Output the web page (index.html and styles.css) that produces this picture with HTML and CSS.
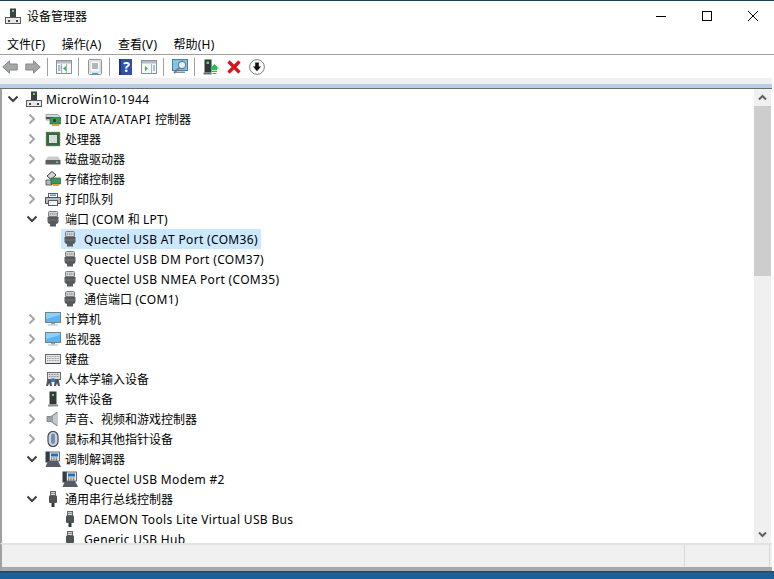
FILE: index.html
```html
<!DOCTYPE html>
<html lang="zh-CN">
<head>
    <meta charset="UTF-8">
    <meta name="viewport" content="width=device-width, initial-scale=1.0">
    <title>设备管理器</title>
    <link rel="stylesheet" href="styles.css">
</head>
<body>

    <!-- icon set -->
    <svg class="defs" width="0" height="0">
        <symbol id="i-pc" viewBox="0 0 16 16">
            <rect x="5" y="0.5" width="6" height="9" fill="#3a4044"/>
            <rect x="7" y="2" width="2" height="2" fill="#5be05b"/>
            <rect x="0.5" y="9.5" width="15" height="6" fill="#e8e8e8" stroke="#55595c"/>
            <rect x="3" y="12" width="2" height="2" fill="#444"/>
            <rect x="11" y="12" width="2" height="2" fill="#444"/>
        </symbol>
        <symbol id="i-ide" viewBox="0 0 16 16">
            <path d="M1 3.5 H13 L15 6 V9 H1 Z" fill="#d4d8da" stroke="#8d9296" stroke-width="0.8"/>
            <rect x="1" y="6" width="7" height="2" fill="#4a4f52"/>
            <rect x="5" y="6.5" width="10.5" height="6.5" fill="#3f9462" stroke="#23663f" stroke-width="0.7"/>
            <rect x="8" y="8" width="3" height="3" fill="#1e4a30"/>
            <rect x="7" y="13" width="7" height="2" fill="#e2a42c"/>
        </symbol>
        <symbol id="i-cpu" viewBox="0 0 16 16">
            <rect x="1" y="1" width="14" height="14" fill="#2f6b4a" stroke="#b59a4a" stroke-width="0.8" stroke-dasharray="1 0.6"/>
            <rect x="4" y="4" width="8" height="8" fill="#dcdcd6"/>
        </symbol>
        <symbol id="i-disk" viewBox="0 0 16 16">
            <path d="M3 5.5 H13 L15.5 9 H0.5 Z" fill="#c9cccd"/>
            <rect x="0.5" y="9" width="15" height="4.5" fill="#5a5e61"/>
            <rect x="11" y="10.5" width="2" height="1.5" fill="#62e062"/>
        </symbol>
        <symbol id="i-store" viewBox="0 0 16 16">
            <path d="M2 5 L7 0.5 L11 4 L6 8.5 Z" fill="#d8d8d8" stroke="#3c4144"/>
            <path d="M1 9 H7 V14 H1 Z" fill="#b4b8b8" stroke="#44484b" stroke-width="0.8"/>
            <rect x="6" y="7" width="9.5" height="6" fill="#3f9462" stroke="#23663f" stroke-width="0.7"/>
            <rect x="8" y="13" width="6" height="2" fill="#e2a42c"/>
        </symbol>
        <symbol id="i-print" viewBox="0 0 16 16">
            <rect x="3.5" y="2.5" width="9" height="4" fill="#fff" stroke="#5a5e61"/>
            <rect x="5" y="3.5" width="6" height="1.5" fill="#3ba0dc"/>
            <path d="M0.5 6.5 H15.5 V12.5 H0.5 Z" fill="#b9bdc0" stroke="#4a4f52"/>
            <rect x="3.5" y="9.5" width="9" height="5" fill="#f4f4f4" stroke="#5a5e61"/>
        </symbol>
        <symbol id="i-port" viewBox="0 0 16 16">
            <path d="M3.5 5.5 V1.5 Q3.5 0.5 4.5 0.5 H11.5 Q12.5 0.5 12.5 1.5 V5.5 Z" fill="#d2d2d2" stroke="#7a7e81"/>
            <path d="M5 3 H11.5" stroke="#6a6e71" stroke-dasharray="1 0.9"/>
            <path d="M2.5 6 H13.5 V10.5 Q13.5 12.5 11 13 V15.5 H5 V13 Q2.5 12.5 2.5 10.5 Z" fill="#565a5d"/>
            <path d="M3 9 H13" stroke="#74787b"/>
        </symbol>
        <symbol id="i-mon" viewBox="0 0 16 16">
            <rect x="0.5" y="1.5" width="15" height="10" fill="#5cb4f0" stroke="#75828c"/>
            <path d="M1 2 H15 V4 L1 8 Z" fill="#8fd0f8"/>
            <rect x="6" y="12" width="4" height="1.5" fill="#9aa2a8"/>
            <rect x="3" y="13.5" width="10" height="1" fill="#b8bec2"/>
        </symbol>
        <symbol id="i-kbd" viewBox="0 0 16 16">
            <rect x="0.5" y="3.5" width="15" height="9" fill="#e4e6e8" stroke="#63686c"/>
            <path d="M2 5.5 H14 M2 7.5 H14 M2 9.5 H14" stroke="#9a9ea2" stroke-dasharray="1 0.6"/>
            <path d="M1 12 H15 V13 H1 Z" fill="#3f4447"/>
        </symbol>
        <symbol id="i-hid" viewBox="0 0 16 16">
            <rect x="2.5" y="1.5" width="13" height="7" fill="#d8dadc" stroke="#6a6e72"/>
            <path d="M4 3.5 H14 M4 5.5 H14" stroke="#8a8e92" stroke-dasharray="1 0.6"/>
            <path d="M1 15 L2.5 8 H6 L7 15 H5 L4.3 12 L3 15 Z" fill="#50555a"/>
            <path d="M9 15 L10 8 H13.5 L15 15 H13 L12 12 L11 15 Z" fill="#50555a"/>
            <path d="M5.5 8.5 Q8 6 10.5 8.5 L10 11 H6 Z" fill="#2f7fc8"/>
        </symbol>
        <symbol id="i-soft" viewBox="0 0 16 16">
            <rect x="4.5" y="0.5" width="7" height="13" fill="#33383b"/>
            <rect x="7" y="3" width="2" height="2" fill="#5be05b"/>
            <rect x="3" y="13.5" width="10" height="2" fill="#8c9093"/>
        </symbol>
        <symbol id="i-snd" viewBox="0 0 16 16">
            <path d="M2 5.5 H6 L12 1 V15 L6 10.5 H2 Z" fill="#9aa2a8" stroke="#73797e" stroke-width="0.8"/>
            <path d="M8 5 L12 2 V14 L8 11 Z" fill="#c2c8cc"/>
        </symbol>
        <symbol id="i-mouse" viewBox="0 0 16 16">
            <rect x="3" y="0.5" width="10" height="15" rx="5" fill="#cfd5da" stroke="#44494c" stroke-width="1.2"/>
            <rect x="6" y="2.5" width="4" height="10.5" rx="2" fill="#6e90b6"/>
        </symbol>
        <symbol id="i-modem" viewBox="0 0 16 16">
            <rect x="0.5" y="0.5" width="4" height="11" fill="#323c44"/>
            <rect x="4.5" y="1" width="10" height="9" fill="#e6eaec" stroke="#444c52" stroke-width="0.8"/>
            <rect x="6" y="2.5" width="7" height="3" fill="#1a70c0"/>
            <path d="M6 7 H13 M6 8.8 H13" stroke="#444" stroke-dasharray="1 0.7"/>
            <path d="M3 10 H13 L16 16 H0.5 Z" fill="#565c61"/>
        </symbol>
        <symbol id="i-usb" viewBox="0 0 16 16">
            <rect x="5.5" y="0.5" width="5" height="4" fill="#dcdcdc" stroke="#666"/>
            <path d="M7 1.8 V3 M9 1.8 V3" stroke="#444"/>
            <rect x="4" y="4.5" width="8" height="7.5" rx="1" fill="#4e5356"/>
            <rect x="6.5" y="12" width="3" height="4" fill="#33383b"/>
        </symbol>
        <symbol id="i-back" viewBox="0 0 16 16">
            <path d="M0.8 8 L7.5 1.8 V5 H15.2 V11 H7.5 V14.2 Z" fill="#a4a7a8" stroke="#85888a"/>
        </symbol>
        <symbol id="i-fwd" viewBox="0 0 16 16">
            <path d="M15.2 8 L8.5 1.8 V5 H0.8 V11 H8.5 V14.2 Z" fill="#a4a7a8" stroke="#85888a"/>
        </symbol>
        <symbol id="i-tree" viewBox="0 0 16 16">
            <rect x="0.5" y="1.5" width="15" height="13" fill="#f6f7f8" stroke="#8a9298"/>
            <rect x="1" y="2" width="14" height="2.5" fill="#b4bcc2"/>
            <path d="M5.5 5 V14 M10.5 5 V14" stroke="#aab2b8"/>
            <path d="M2 7 H4.5 M2 9 H4.5 M2 11 H4.5" stroke="#4a90c8"/>
            <path d="M10 7 V12 L7 9.5 Z" fill="#3cb44a"/>
        </symbol>
        <symbol id="i-prop" viewBox="0 0 16 16">
            <rect x="1.5" y="0.5" width="13" height="15" rx="1" fill="#eceeef" stroke="#8e9498"/>
            <rect x="3" y="2" width="10" height="11" fill="#fafafa" stroke="#b6bbbe" stroke-width="0.6"/>
            <path d="M5 5 H11 M5 7 H11 M5 9 H11" stroke="#6d747a"/>
            <rect x="5" y="14" width="6" height="1.5" fill="#3ba0dc"/>
        </symbol>
        <symbol id="i-view" viewBox="0 0 16 16">
            <rect x="0.5" y="1.5" width="15" height="13" fill="#f6f7f8" stroke="#8a9298"/>
            <rect x="1" y="2" width="14" height="2.5" fill="#b4bcc2"/>
            <path d="M10.5 5 V14" stroke="#aab2b8"/>
            <path d="M12 7 H14 M12 9 H14 M12 11 H14" stroke="#4a90c8"/>
            <path d="M4 7 V12 L7 9.5 Z" fill="#3cb44a"/>
        </symbol>
        <symbol id="i-scan" viewBox="0 0 16 16">
            <rect x="0.5" y="0.5" width="15" height="11" fill="#7cc2ec" stroke="#4c7f9e"/>
            <rect x="3" y="12.5" width="10" height="1.5" fill="#8c9498"/>
            <circle cx="10" cy="6" r="3.6" fill="#dff1fb" stroke="#6c7c86" stroke-width="1.1"/>
            <path d="M7.2 8.8 L2 14" stroke="#6c7c86" stroke-width="1.8"/>
        </symbol>
        <symbol id="i-update" viewBox="0 0 16 16">
            <rect x="1.5" y="0.5" width="7" height="13" fill="#2f3538"/>
            <rect x="3.5" y="2.5" width="2.5" height="2.5" fill="#4ee04e"/>
            <rect x="0.5" y="13.5" width="8" height="2" fill="#6a6f72"/>
            <path d="M11.5 5 L16 9.5 H14 V11 H9 V9.5 H7 Z" fill="#22c24a"/>
            <path d="M9 12.3 H14 M9.5 14.5 H13.5" stroke="#22c24a" stroke-width="1.2"/>
        </symbol>
        <symbol id="i-del" viewBox="0 0 16 16">
            <path d="M2.5 2.5 L13.5 13.5 M13.5 2.5 L2.5 13.5" stroke="#d8141c" stroke-width="3.2"/>
        </symbol>
        <symbol id="i-down" viewBox="0 0 16 16">
            <circle cx="8" cy="8" r="7.4" fill="#fbfbfb" stroke="#7e8285"/>
            <path d="M6.2 3.5 H9.8 V7.5 H12 L8 12.2 L4 7.5 H6.2 Z" fill="#111"/>
        </symbol>
        <symbol id="c-right" viewBox="0 0 16 16">
            <path d="M5.5 3.5 L10 8 L5.5 12.5" fill="none" stroke="#a6a6a6" stroke-width="2"/>
        </symbol>
        <symbol id="c-down" viewBox="0 0 16 16">
            <path d="M3.5 5.5 L8 10 L12.5 5.5" fill="none" stroke="#404040" stroke-width="2"/>
        </symbol>
    </svg>

    <div class="window">
        <div class="titlebar">
            <svg class="icon"><use href="#i-pc"/></svg>
            <span class="title-text">设备管理器</span>
            <div class="win-buttons">
                <svg width="10" height="10"><path d="M0 5.5 H10" stroke="#000"/></svg>
                <svg width="10" height="10"><rect x="0.5" y="0.5" width="9" height="9" fill="none" stroke="#000"/></svg>
                <svg width="10" height="10"><path d="M0 0 L10 10 M10 0 L0 10" stroke="#000"/></svg>
            </div>
        </div>

        <div class="menubar">
            <span>文件<span class="en">(F)</span></span>
            <span>操作<span class="en">(A)</span></span>
            <span>查看<span class="en">(V)</span></span>
            <span>帮助<span class="en">(H)</span></span>
        </div>

        <div class="toolbar">
            <svg class="icon tool"><use href="#i-back"/></svg>
            <svg class="icon tool"><use href="#i-fwd"/></svg>
            <i class="sep"></i>
            <svg class="icon tool"><use href="#i-tree"/></svg>
            <i class="sep"></i>
            <svg class="icon tool"><use href="#i-prop"/></svg>
            <i class="sep"></i>
            <span class="help-btn tool">?</span>
            <svg class="icon tool"><use href="#i-view"/></svg>
            <i class="sep"></i>
            <svg class="icon tool"><use href="#i-scan"/></svg>
            <i class="sep"></i>
            <svg class="icon tool"><use href="#i-update"/></svg>
            <svg class="icon tool"><use href="#i-del"/></svg>
            <svg class="icon tool"><use href="#i-down"/></svg>
        </div>

        <div class="band"></div>

        <div class="content">
            <div class="tree">
                <div class="row root"><svg class="icon chev"><use href="#c-down"/></svg><svg class="icon"><use href="#i-pc"/></svg><span class="label en">MicroWin10-1944</span></div>
                <div class="row"><svg class="icon chev"><use href="#c-right"/></svg><svg class="icon"><use href="#i-ide"/></svg><span class="label"><span class="en caps">IDE ATA/ATAPI </span>控制器</span></div>
                <div class="row"><svg class="icon chev"><use href="#c-right"/></svg><svg class="icon"><use href="#i-cpu"/></svg><span class="label">处理器</span></div>
                <div class="row"><svg class="icon chev"><use href="#c-right"/></svg><svg class="icon"><use href="#i-disk"/></svg><span class="label">磁盘驱动器</span></div>
                <div class="row"><svg class="icon chev"><use href="#c-right"/></svg><svg class="icon"><use href="#i-store"/></svg><span class="label">存储控制器</span></div>
                <div class="row"><svg class="icon chev"><use href="#c-right"/></svg><svg class="icon"><use href="#i-print"/></svg><span class="label">打印队列</span></div>
                <div class="row"><svg class="icon chev"><use href="#c-down"/></svg><svg class="icon"><use href="#i-port"/></svg><span class="label">端口 <span class="en">(COM</span> 和 <span class="en">LPT)</span></span></div>
                <div class="row child"><span class="selected"><svg class="icon"><use href="#i-port"/></svg><span class="label en">Quectel USB AT Port (COM36)</span></span></div>
                <div class="row child"><svg class="icon"><use href="#i-port"/></svg><span class="label en">Quectel USB DM Port (COM37)</span></div>
                <div class="row child"><svg class="icon"><use href="#i-port"/></svg><span class="label en">Quectel USB NMEA Port (COM35)</span></div>
                <div class="row child"><svg class="icon"><use href="#i-port"/></svg><span class="label">通信端口 <span class="en">(COM1)</span></span></div>
                <div class="row"><svg class="icon chev"><use href="#c-right"/></svg><svg class="icon"><use href="#i-mon"/></svg><span class="label">计算机</span></div>
                <div class="row"><svg class="icon chev"><use href="#c-right"/></svg><svg class="icon"><use href="#i-mon"/></svg><span class="label">监视器</span></div>
                <div class="row"><svg class="icon chev"><use href="#c-right"/></svg><svg class="icon"><use href="#i-kbd"/></svg><span class="label">键盘</span></div>
                <div class="row"><svg class="icon chev"><use href="#c-right"/></svg><svg class="icon"><use href="#i-hid"/></svg><span class="label">人体学输入设备</span></div>
                <div class="row"><svg class="icon chev"><use href="#c-right"/></svg><svg class="icon"><use href="#i-soft"/></svg><span class="label">软件设备</span></div>
                <div class="row"><svg class="icon chev"><use href="#c-right"/></svg><svg class="icon"><use href="#i-snd"/></svg><span class="label">声音、视频和游戏控制器</span></div>
                <div class="row"><svg class="icon chev"><use href="#c-right"/></svg><svg class="icon"><use href="#i-mouse"/></svg><span class="label">鼠标和其他指针设备</span></div>
                <div class="row"><svg class="icon chev"><use href="#c-down"/></svg><svg class="icon"><use href="#i-modem"/></svg><span class="label">调制解调器</span></div>
                <div class="row child"><svg class="icon"><use href="#i-modem"/></svg><span class="label en">Quectel USB Modem #2</span></div>
                <div class="row"><svg class="icon chev"><use href="#c-down"/></svg><svg class="icon"><use href="#i-usb"/></svg><span class="label">通用串行总线控制器</span></div>
                <div class="row child"><svg class="icon"><use href="#i-usb"/></svg><span class="label en">DAEMON Tools Lite Virtual USB Bus</span></div>
                <div class="row child"><svg class="icon"><use href="#i-usb"/></svg><span class="label en">Generic USB Hub</span></div>
            </div>
            <div class="scrollbar">
                <div class="arrow"><svg width="9" height="7"><path d="M1 5.5 L4.5 2 L8 5.5" fill="none" stroke="#606060" stroke-width="2"/></svg></div>
                <div class="thumb"></div>
                <div class="track"></div>
                <div class="arrow"><svg width="9" height="7"><path d="M1 1.5 L4.5 5 L8 1.5" fill="none" stroke="#606060" stroke-width="2"/></svg></div>
            </div>
        </div>

        <div class="statusbar">
            <div class="status-main"></div>
            <div class="status-cell"></div>
        </div>
    </div>

    <div class="desktop"></div>

</body>
</html>
```

FILE: styles.css
```css
* {
    box-sizing: border-box;
}
body {
    margin: 0;
    width: 774px;
    height: 579px;
    overflow: hidden;
    display: flex;
    flex-direction: column;
    font-family: "Noto Sans", "Noto Sans CJK SC", sans-serif;
    font-size: 12px;
    color: #000;
    background-color: #fff;
}
.defs {
    position: absolute;
}
.icon {
    width: 16px;
    height: 16px;
    flex: none;
}
.en {
    letter-spacing: 0.33px;
}
.en.caps {
    letter-spacing: 0.55px;
}
.window {
    height: 571px;
    display: flex;
    flex-direction: column;
    border-top: 1px solid #1f3f55;
    overflow: hidden;
}
.titlebar {
    height: 30px;
    flex: none;
    display: flex;
    align-items: center;
    padding-left: 5px;
}
.title-text {
    margin-left: 6px;
}
.win-buttons {
    margin-left: auto;
    padding-right: 16px;
    display: flex;
    gap: 36px;
    align-items: center;
}
.win-buttons svg {
    display: block;
}
.menubar {
    height: 24px;
    flex: none;
    display: flex;
    align-items: center;
    gap: 16.3px;
    padding: 2px 0 0 7px;
    border-bottom: 1px solid #a0a0a0;
}
.toolbar {
    height: 23px;
    flex: none;
    display: flex;
    align-items: center;
    padding-left: 2px;
}
.tool {
    margin-right: 7px;
}
.sep {
    width: 1px;
    height: 18px;
    margin: 0 8px 0 -1px;
    background-color: #a0a0a0;
}
.help-btn {
    width: 13px;
    height: 16px;
    margin-left: 1px;
    margin-right: 9px;
    flex: none;
    text-align: center;
    line-height: 16px;
    font-size: 14px;
    font-weight: bold;
    color: #fff;
    background-color: #2f4fa8;
    border-left: 2px solid #1c3478;
}
.band {
    height: 11px;
    flex: none;
    margin-right: 2px;
    background-color: #f0f0f0;
    border-bottom: 1px solid #6d6d6d;
    box-shadow: inset 0 -4px 0 #b5cfe9;
}
.content {
    height: 454px;
    flex: none;
    display: flex;
    margin-right: 3px;
    border-left: 2px solid #a0a0a0;
    overflow: hidden;
}
.tree {
    flex: 1;
    min-width: 0;
    overflow: hidden;
}
.row {
    height: 20px;
    display: flex;
    align-items: center;
    padding-left: 22px;
    white-space: nowrap;
}
.row.root {
    padding-left: 3px;
}
.chev {
    margin-right: 5px;
}
.row.child {
    padding-left: 60px;
}
.row .icon + .label {
    margin-left: 4px;
}
.row.child .icon + .label {
    margin-left: 6px;
}
.selected {
    display: flex;
    align-items: center;
    height: 20px;
    margin-left: -1px;
    padding: 0 3px 0 1px;
    background-color: #cce8ff;
}
.scrollbar {
    width: 17px;
    flex: none;
    display: flex;
    flex-direction: column;
    background-color: #f0f0f0;
}
.arrow {
    height: 17px;
    flex: none;
    display: flex;
    align-items: center;
    justify-content: center;
}
.arrow svg {
    display: block;
}
.thumb {
    height: 170px;
    flex: none;
    background-color: #cdcdcd;
}
.track {
    flex: 1;
}
.statusbar {
    flex: 1;
    display: flex;
    margin-right: 2px;
    background-color: #f0f0f0;
    border-left: 2px solid #a0a0a0;
    border-top: 2px solid #e2e2e2;
    border-bottom: 4px solid #a8a8a8;
    padding-right: 2px;
}
.status-main {
    width: 683px;
    flex: none;
    border-right: 1px solid #d8d8d8;
}
.status-cell {
    flex: 1;
    border-right: 1px solid #d8d8d8;
}
.desktop {
    flex: 1;
    background: linear-gradient(#15436b, #1a6099 25%);
}
```
